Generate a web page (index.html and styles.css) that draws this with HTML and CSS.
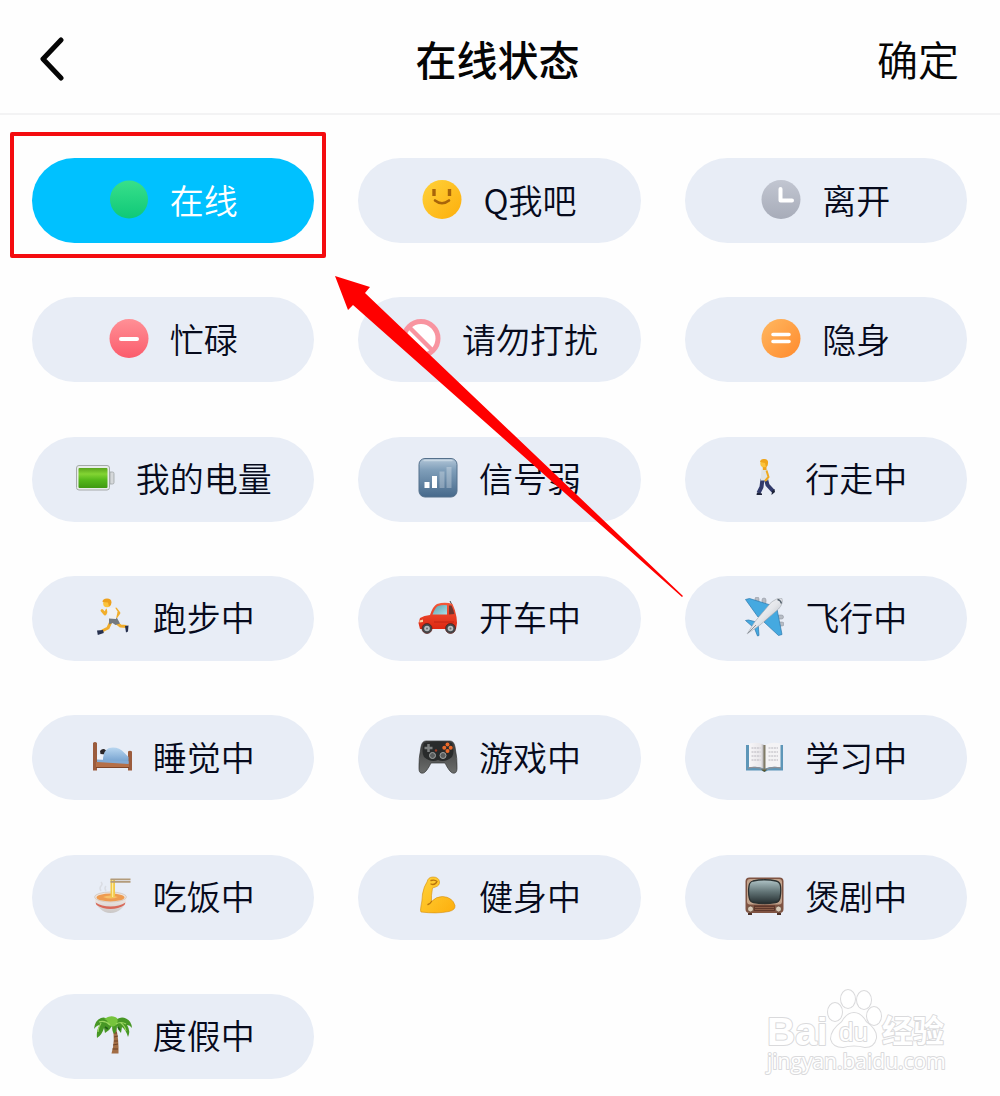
FILE: index.html
```html
<!DOCTYPE html>
<html lang="zh-CN">
<head>
    <meta charset="UTF-8">
    <meta name="viewport" content="width=device-width, initial-scale=1.0">
    <title>在线状态</title>
    <link rel="stylesheet" href="styles.css">
</head>
<body>
<svg class="defs" aria-hidden="true">
    <defs>
        <linearGradient id="green" x1="0" y1="0" x2="0" y2="1"><stop offset="0" stop-color="#38e08a"/><stop offset="1" stop-color="#0fc878"/></linearGradient>
        <linearGradient id="yellow" x1="0" y1="0" x2="1" y2="1"><stop offset="0" stop-color="#ffd23a"/><stop offset="1" stop-color="#fdae0c"/></linearGradient>
        <linearGradient id="grey" x1="0" y1="0" x2="0" y2="1"><stop offset="0" stop-color="#c2c6d1"/><stop offset="1" stop-color="#a7acb9"/></linearGradient>
        <linearGradient id="red" x1="0" y1="0" x2="0" y2="1"><stop offset="0" stop-color="#ff9096"/><stop offset="1" stop-color="#fb5c6c"/></linearGradient>
        <linearGradient id="orange" x1="0" y1="0" x2="1" y2="1"><stop offset="0" stop-color="#ffb861"/><stop offset="1" stop-color="#ff8a2c"/></linearGradient>
        <linearGradient id="battery" x1="0" y1="0" x2="0" y2="1"><stop offset="0" stop-color="#5aa51c"/><stop offset=".3" stop-color="#83d433"/><stop offset=".6" stop-color="#55b81a"/><stop offset="1" stop-color="#3f9a10"/></linearGradient>
        <linearGradient id="signal" x1="0" y1="0" x2="0" y2="1"><stop offset="0" stop-color="#b3c7d8"/><stop offset=".3" stop-color="#7f9eb9"/><stop offset="1" stop-color="#46698b"/></linearGradient>
        <linearGradient id="glass" x1="0" y1="0" x2="1" y2="1"><stop offset="0" stop-color="#5aa3b0"/><stop offset="1" stop-color="#a9dfe6"/></linearGradient>
        <linearGradient id="car" x1="0" y1="0" x2="0" y2="1"><stop offset="0" stop-color="#f4593a"/><stop offset="1" stop-color="#dc2712"/></linearGradient>
        <linearGradient id="hull" x1="0" y1="0" x2="1" y2="1"><stop offset="0" stop-color="#ffffff"/><stop offset=".5" stop-color="#e4e6ea"/><stop offset="1" stop-color="#9ba0a8"/></linearGradient>
        <linearGradient id="blanket" x1="0" y1="0" x2="0" y2="1"><stop offset="0" stop-color="#b8d6f0"/><stop offset="1" stop-color="#6d9bcb"/></linearGradient>
        <linearGradient id="bowl" x1="0" y1="0" x2="0" y2="1"><stop offset="0" stop-color="#f6eee9"/><stop offset="1" stop-color="#c9c6c6"/></linearGradient>
        <linearGradient id="pad" x1="0" y1="0" x2="0" y2="1"><stop offset="0" stop-color="#3b3c3c"/><stop offset="1" stop-color="#6b6d6b"/></linearGradient>
        <linearGradient id="screen" x1="0" y1="0" x2="0" y2="1"><stop offset="0" stop-color="#b1c5c8"/><stop offset=".5" stop-color="#637577"/><stop offset="1" stop-color="#252e30"/></linearGradient>
        <linearGradient id="page" x1="0" y1="0" x2="1" y2="0"><stop offset="0" stop-color="#f7f6f8"/><stop offset=".8" stop-color="#e9e7ea"/><stop offset="1" stop-color="#a9a6a8"/></linearGradient>
    </defs>
</svg>

<header class="navbar">
    <button type="button" class="back" aria-label="返回">
        <svg class="chevron" viewBox="0 0 28 48"><path d="M25 6 7 25l18 19"/></svg>
    </button>
    <h1>在线状态</h1>
    <button type="button" class="confirm">确定</button>
</header>

<main class="status-grid">
    <button type="button" class="status active" aria-pressed="true">
        <svg class="icon" viewBox="0 0 40 40"><circle cx="20" cy="19.500" r="19" fill="url(#green)"/></svg>
        在线
    </button>
    <button type="button" class="status">
        <svg class="icon" viewBox="0 0 40 40">
            <circle cx="20" cy="19.500" r="19.500" fill="url(#yellow)"/>
            <path d="M12 9v7M27.500 9v7" stroke="#a8650a" stroke-width="3.400"/>
            <path d="M13 20.500q7 5.500 14 0" fill="none" stroke="#a8650a" stroke-width="2.600" stroke-linecap="round"/>
        </svg>
        Q我吧
    </button>
    <button type="button" class="status">
        <svg class="icon" viewBox="0 0 40 40">
            <circle cx="20" cy="19.500" r="19.500" fill="url(#grey)"/>
            <path d="M19.500 9v11.500H31" fill="none" stroke="#fff" stroke-width="4" stroke-linecap="round" stroke-linejoin="round"/>
        </svg>
        离开
    </button>
    <button type="button" class="status">
        <svg class="icon" viewBox="0 0 40 40">
            <circle cx="20" cy="19.500" r="19.500" fill="url(#red)"/>
            <path d="M12 20h16" stroke="#fff" stroke-width="4" stroke-linecap="round"/>
        </svg>
        忙碌
    </button>
    <button type="button" class="status">
        <svg class="icon" viewBox="0 0 40 40">
            <circle cx="20" cy="19.500" r="17" fill="#fff" stroke="#f894a0" stroke-width="5"/>
            <path d="M8 8l24 24" stroke="#f894a0" stroke-width="4.500"/>
        </svg>
        请勿打扰
    </button>
    <button type="button" class="status">
        <svg class="icon" viewBox="0 0 40 40">
            <circle cx="20" cy="19.500" r="19.500" fill="url(#orange)"/>
            <path d="M12 15.500h16M12 22.500h16" stroke="#fff" stroke-width="3.600" stroke-linecap="round"/>
        </svg>
        隐身
    </button>
    <button type="button" class="status">
        <svg class="icon" viewBox="0 0 40 40">
            <rect x="1.500" y="7.500" width="33" height="24.500" rx="2.500" fill="#e8ecea" stroke="#a5aaa9"/>
            <path d="M35 14h2.500q1.500 0 1.500 1.500v9q0 1.500-1.500 1.500H35z" fill="#d5d8da" stroke="#9fa4a6" stroke-width=".8"/>
            <rect x="3.500" y="10" width="29" height="20" rx="1" fill="url(#battery)"/>
        </svg>
        我的电量
    </button>
    <button type="button" class="status">
        <svg class="icon" viewBox="0 0 40 40">
            <rect x="1" y=".5" width="38" height="38.500" rx="6" fill="url(#signal)" stroke="#54708c"/>
            <path d="M6 2.500h28" stroke="#d2e0ea" stroke-width="1.500" stroke-linecap="round" opacity=".7"/>
            <path d="M6.500 24h5v6h-5zM14 18h5v12h-5z" fill="#fff"/>
            <path d="M21.500 13.500h5V30h-5zM28.500 9h5v21h-5z" fill="#fff" opacity=".28"/>
        </svg>
        信号弱
    </button>
    <button type="button" class="status">
        <svg class="icon" viewBox="0 0 40 40">
            <path d="M18.500 21l-1 8-3 6M22 21l1.500 6 5.500 6" fill="none" stroke="#313a6b" stroke-width="4" stroke-linejoin="round"/>
            <path d="M13 34.500l5 1v1.500h-5.500zM28 33l2.500-2 .5 3-3.500 3z" fill="#1c2238"/>
            <path d="M17.500 11.500q3-2 6 0l1.500 6-1.500 5h-7z" fill="#dfe3e6"/>
            <path d="M22.500 12.500l2 6.500-3.500 4" fill="none" stroke="#efa91f" stroke-width="2"/>
            <path d="M18.500 8h4v4h-3.500z" fill="#eda41f"/>
            <circle cx="20" cy="5.500" r="3.700" fill="#fbc33c"/>
            <path d="M16 4q.5-3.500 4.500-3t3.500 4q0 3-2 4l-1-4z" fill="#efa51c"/>
        </svg>
        行走中
    </button>
    <button type="button" class="status">
        <svg class="icon" viewBox="0 0 40 40">
            <path d="M19 24.500l-3 6.500-6 3M24 25.500l4.500 3.500 6 .5" fill="none" stroke="#f0ac2b" stroke-width="3" stroke-linejoin="round"/>
            <path d="M5 33.500l6-.5.800 3-6 2zM33 29l3.500-.5-.5 6-2 1z" fill="#27314f"/>
            <path d="M15 13l-2 4-3-3.500M24 12l3 4-3.500 5" fill="none" stroke="#f1ae2c" stroke-width="2.800" stroke-linejoin="round" stroke-linecap="round"/>
            <path d="M17 20.500l8 .5 3 5.500-4.500 1.500-3-2-3.500 1.500z" fill="#74797e"/>
            <path d="M14.500 11l8.500-.5 2.500 4-1.500 7.500-7-.5z" fill="#f1f2f4"/>
            <circle cx="15" cy="6.500" r="3.800" fill="#fbc33c"/>
            <path d="M10.500 5q0-3.500 4.500-3.500t4.500 4q0 3-2.500 4L16 5.500z" fill="#eda01c"/>
        </svg>
        跑步中
    </button>
    <button type="button" class="status">
        <svg class="icon" viewBox="0 0 40 40">
            <path d="M33.500 7l-1.500-3" stroke="#444" stroke-width="1"/>
            <path d="M12 18q3-9 7-11 8-2.500 15.500 0 2.500 5 4 13l.5 6-1 6H2L.5 26l1.500-5q4-2.500 10-3z" fill="url(#car)"/>
            <path d="M14.500 17.500q2.500-7 5.500-8.500 4-1.200 9-.8V17.500z" fill="url(#glass)"/>
            <path d="M31 8.500h2.500q2 4 2.800 8.500l-5.300.5z" fill="#6e3630"/>
            <path d="M1.500 23.500l3.500-1v2.500l-3.500.5z" fill="#fbd2a0"/>
            <path d="M16 25h20" stroke="#b92011" stroke-width=".8"/>
            <g fill="#43474a" stroke="#5a1812" stroke-width=".7"><circle cx="9" cy="31.500" r="5"/><circle cx="32.500" cy="31.500" r="5"/></g>
            <g fill="#b8bdc0"><circle cx="9" cy="31.500" r="2.800"/><circle cx="32.500" cy="31.500" r="2.800"/></g>
            <g fill="#6c7275"><circle cx="9" cy="31.500" r="1"/><circle cx="32.500" cy="31.500" r="1"/></g>
        </svg>
        开车中
    </button>
    <button type="button" class="status">
        <svg class="icon" viewBox="0 0 40 40">
            <g fill="#b7bcc4" stroke="#868c96" stroke-width=".5"><rect x="11" y="0" width="4" height="6" rx="2"/><rect x="18" y="1" width="4" height="6" rx="2"/><rect x="33.500" y="18" width="6" height="4" rx="2"/><rect x="34" y="25" width="6" height="4" rx="2"/></g>
            <path d="M1.500 2.500l4-1L28 8.500 14 20zM38 37.500l-3.500 1L20 25 33 12zM1.500 23.500l3-.5 10 2.500-5 5zM15 38.500l-1.500.5-3.500-9 4-5z" fill="#45a9e0" stroke="#2d79ae" stroke-width=".7"/>
            <path d="M3 37l8-12.500L27.500 5Q33 .5 38 1.500q1.500 5-3.500 10.500L16 28z" fill="url(#hull)" stroke="#a3a7ae" stroke-width=".6"/>
            <path d="M33.500 2.500q3 .5 4 4" fill="none" stroke="#53606c" stroke-width="1.300"/>
            <path d="M4 36l8-8" stroke="#8b929b" stroke-width="1"/>
        </svg>
        飞行中
    </button>
    <button type="button" class="status">
        <svg class="icon" viewBox="0 0 40 40">
            <path d="M1 6q2-2 4 0v27.500H1zM36 14.500q2-1.500 4 0v19h-4z" fill="#9b5c3d"/>
            <path d="M4 25h33v6H4z" fill="#b56f47"/>
            <path d="M4 30.500h33" stroke="#7f4528" stroke-width="1"/>
            <path d="M5 18.500q5-3 9 0V24H5z" fill="#eef3fa"/>
            <path d="M8 14q3-3.500 6-.5l-.5 4-5-.5z" fill="#2a2628"/>
            <path d="M11 21q1-8 6-10 9-2 15.500 5l4 4v6.500L11 23.500z" fill="url(#blanket)"/>
            <path d="M5 22.500l31.500 1.500v3L5 25z" fill="#82aad4"/>
        </svg>
        睡觉中
    </button>
    <button type="button" class="status">
        <svg class="icon" viewBox="0 0 40 40">
            <path d="M8 4h24q4 0 5 6 2.500 12 2 22-.3 5-4.500 4-3-1-7.500-10H13Q8.500 35 5.500 36 1 37 1 32 .5 22 3 10q1-6 5-6z" fill="url(#pad)" stroke="#353636" stroke-width=".7"/>
            <path d="M6 6q14-3 28 0 3 9 0 14-7 6-14 3-7 3-14-3Q3 15 6 6z" fill="#292b2b"/>
            <path d="M10.500 7v8M6.500 11h8" stroke="#7d8080" stroke-width="2.500"/>
            <g fill="#ed6a2a"><circle cx="29.500" cy="7.500" r="2"/><circle cx="29.500" cy="14" r="2"/><circle cx="26.300" cy="10.800" r="2"/><circle cx="32.700" cy="10.800" r="2"/></g>
            <circle cx="18" cy="13.500" r="1.200" fill="#a43c24"/>
            <g fill="#5a5d5d" stroke="#a1a4a3" stroke-width="1"><circle cx="14.500" cy="18.500" r="3"/><circle cx="25" cy="18.500" r="3"/></g>
        </svg>
        游戏中
    </button>
    <button type="button" class="status">
        <svg class="icon" viewBox="0 0 40 40">
            <path d="M2 8h37v25.500H24l-3.500 1.500-3-1.500H2z" fill="#5d96b8"/>
            <path d="M5 6.500q9-2 15 1.500v23.500q-7-3-15-1z" fill="url(#page)"/>
            <path d="M36.500 6.500q-9-2-15.500 1.500v23.500q7-3 15.500-1z" fill="#f4f3f5"/>
            <path d="M4 31q9-2 16.500 2 7-4 16.500-2" fill="none" stroke="#8f8e94" stroke-width="1.300"/>
            <path d="M7.500 11h9M7.500 15h9M7.500 19h9M7.500 23h9M24.500 11H34M24.500 15H34M24.500 19H34M24.500 23H34" stroke="#b8b6bd" stroke-width="1" stroke-dasharray="2 .7"/>
            <path d="M19.500 8v24h2V8z" fill="#807b67"/>
            <path d="M17 32.500h6l-2.500 2.500z" fill="#5e5a32"/>
        </svg>
        学习中
    </button>
    <button type="button" class="status">
        <svg class="icon" viewBox="0 0 40 40">
            <path d="M9 15q-2-3 0-5t0-4M14 15q-2-3 0-5" fill="none" stroke="#dadde3" stroke-width="1.500"/>
            <path d="M2.500 21q.5 8 6 12 4 4 10 4t10.500-4q5-4 5.500-12z" fill="url(#bowl)"/>
            <ellipse cx="18.500" cy="21" rx="16" ry="5" fill="#eee4dc" stroke="#c6bcb4" stroke-width=".6"/>
            <ellipse cx="18.500" cy="21.500" rx="14" ry="3.900" fill="#ee9b50"/>
            <path d="M11 21q7-3 15 0-7 3-15 0z" fill="#f6c06b"/>
            <path d="M3.500 26.500q6 4 15 4t15-4l-1 2.500q-6 4-14 4t-14-4z" fill="#d8695a"/>
            <path d="M19.500 3v19M22 3v18" stroke="#f2c94a" stroke-width="2"/>
            <path d="M20.700 4v17" stroke="#fff0a6" stroke-width="1"/>
            <path d="M18.500 2.500h20v1.800h-20zM18.500 5h20v1.800h-20z" fill="#b29b7b"/>
        </svg>
        吃饭中
    </button>
    <button type="button" class="status">
        <svg class="icon" viewBox="0 0 40 40">
            <path d="M9 6q1-5 6-5 5.500 0 6.500 4.500.5 4-4 5.500l-3 1q-1.500 8-1 13.500 4.500-5 11-5 10 .5 12.500 9 .5 4.500-6 6-12 2.500-28 .5Q2 35 3 30q1-4 1.500-12Q6 10 9 6z" fill="url(#yellow)" stroke="#d58d0c" stroke-width=".6"/>
            <path d="M13 4.500q4-1 6 1M13 8q3 1.500 5.500-1.500M13.500 25.500q-1.500 2.500-3.500 3" fill="none" stroke="#b9730c" stroke-width="1.300" stroke-linecap="round"/>
        </svg>
        健身中
    </button>
    <button type="button" class="status">
        <svg class="icon" viewBox="0 0 40 40">
            <rect x="1.500" y="1.500" width="38" height="35.500" rx="4" fill="#805443"/>
            <rect x="3" y="3" width="35" height="25.500" rx="3" fill="#c2a38c"/>
            <path d="M9 5q12-2.500 23 0 4 1 4.500 5 .7 6-.5 12-1 4-4.500 4.500-11 2-22 0Q6 26 5.300 22 4 16 5 10q.5-4 4-5z" fill="url(#screen)" stroke="#2b3030" stroke-width="1.300"/>
            <path d="M10 29.500h21v5.500H10z" fill="#5e372b"/>
            <path d="M11 31.500h19M11 33.500h19" stroke="#94644e" stroke-width=".8"/>
            <path d="M4 37h4v2H4zM33 37h4v2h-4z" fill="#4d332a"/>
            <g fill="#d8cab8" stroke="#5e4030" stroke-width=".8"><circle cx="6.500" cy="33" r="3"/><circle cx="34.500" cy="33" r="3"/></g>
        </svg>
        煲剧中
    </button>
    <button type="button" class="status">
        <svg class="icon" viewBox="0 0 40 40">
            <path d="M20.500 13q3 12-1 25.500h7q.5-14-2.500-26z" fill="#a26d45"/>
            <path d="M22 18h3M22 22l4-1M22 26h4M21 30l5-1M20.500 34h5.500" stroke="#6f4328" stroke-width="1"/>
            <path d="M20 9Q15 1 9 3 3 5 2 14q3-4 6-4-4 5-3 13 5-3 7-10l1 5q5-3 7-7 0 5 2 8 3-3 3-8 1 4 4 7l1-6q4 3 6 10 3-6-1-12 3 0 5 3-.5-7-6-9.500Q27 0 20 9z" fill="#479725"/>
            <path d="M12 4q6-4 11-2 4 1 2 7-4 5-9 0 0-4-4-5z" fill="#76c43d"/>
            <path d="M7 7q6-2 11 3M24 9q5-3 10 0M9 8q-3 5-3 9M29 8q4 3 5 8" fill="none" stroke="#9bd660" stroke-width="1.200"/>
            <path d="M13 12l3 2M26 12l2 3" stroke="#245f19" stroke-width="1.600"/>
        </svg>
        度假中
    </button>

    <svg class="arrow" viewBox="0 0 350 322" aria-hidden="true"><path d="M0 0l35 11-5 6 318 303-1 1L18 29l-5 5z"/></svg>
</main>

<svg class="watermark" viewBox="0 0 190 96" role="img" aria-label="Baidu 经验">
    <text class="brand" x="4" y="60">Bai</text>
    <g class="paw">
        <ellipse cx="72" cy="27" rx="7" ry="9"/>
        <ellipse cx="85" cy="14" rx="7" ry="9"/>
        <ellipse cx="101" cy="15" rx="7" ry="9"/>
        <ellipse cx="111" cy="31" rx="7" ry="9"/>
        <path d="M91 28q7 0 12 9 11 8 10 16-2 9-11 9-11-3-22 0-10 0-12-8 0-9 11-17 5-9 12-9z"/>
    </g>
    <text class="du" x="76" y="56">du</text>
    <text class="product" x="119" y="57">经验</text>
    <text class="url" x="4" y="84">jingyan.baidu.com</text>
</svg>
</body>
</html>
```
FILE: styles.css
```css
* {
    box-sizing: border-box;
}

body {
    display: flex;
    flex-direction: column;
    min-height: 100vh;
    margin: 0;
    background-color: #fefefe;
    color: #060a1c;
    font-family: "Noto Sans CJK SC", sans-serif;
}

button {
    padding: 0;
    border: none;
    background: none;
    color: inherit;
    font-family: inherit;
    cursor: pointer;
}

.defs {
    position: absolute;
    width: 0;
    height: 0;
}

.navbar {
    display: grid;
    grid-template-columns: 1fr auto 1fr;
    align-items: center;
    height: 115px;
    padding: 2px 41px 0 36px;
    border-bottom: 2px solid #f3f3f4;
    color: #050505;
}

h1 {
    margin: 0;
    font-size: 41px;
    font-weight: 500;
    line-height: 60px;
}

.back {
    justify-self: start;
    height: 48px;
}

.chevron {
    display: block;
    width: 28px;
    height: 48px;
    fill: none;
    stroke: #050505;
    stroke-width: 5;
    stroke-linecap: round;
    stroke-linejoin: round;
}

.confirm {
    justify-self: end;
    font-size: 41px;
    font-weight: 350;
    line-height: 60px;
}

.status-grid {
    position: relative;
    flex: 1;
    display: grid;
    grid-template-columns: repeat(3, 1fr);
    grid-auto-rows: 85px;
    align-content: space-between;
    column-gap: 44px;
    row-gap: 24px;
    padding: 43px 33px 17px 32px;
}

.status {
    position: relative;
    display: flex;
    align-items: center;
    justify-content: center;
    gap: 21px;
    padding-bottom: 2px;
    border-radius: 43px;
    background-color: #e8edf6;
    font-size: 34px;
    font-weight: 350;
    line-height: 50px;
    white-space: nowrap;
}

.status.active {
    background-color: #00c1ff;
    color: #ffffff;
}

/* red frame around the selected status */
.status.active::after {
    content: "";
    position: absolute;
    inset: -26px -12px -15px -22px;
    border: 4px solid #f40b0f;
    border-radius: 2px;
}

.icon {
    flex: none;
    width: 40px;
    height: 40px;
}

.arrow {
    position: absolute;
    top: 161px;
    left: 335px;
    width: 350px;
    height: 322px;
    fill: #ff0000;
    pointer-events: none;
}

.watermark {
    position: absolute;
    top: 985px;
    right: 47px;
    width: 190px;
    height: 96px;
    fill: #ffffff;
    stroke: #dadadc;
    stroke-width: 2;
    stroke-linejoin: round;
    paint-order: stroke;
    pointer-events: none;
}

.brand {
    font: bold 39px "Liberation Sans", sans-serif;
}

.du {
    font: 26px "Liberation Sans", sans-serif;
}

.product {
    font: bold 31px "Noto Sans CJK SC", sans-serif;
}

.url {
    font: 21px "Open Sans", sans-serif;
}
```
